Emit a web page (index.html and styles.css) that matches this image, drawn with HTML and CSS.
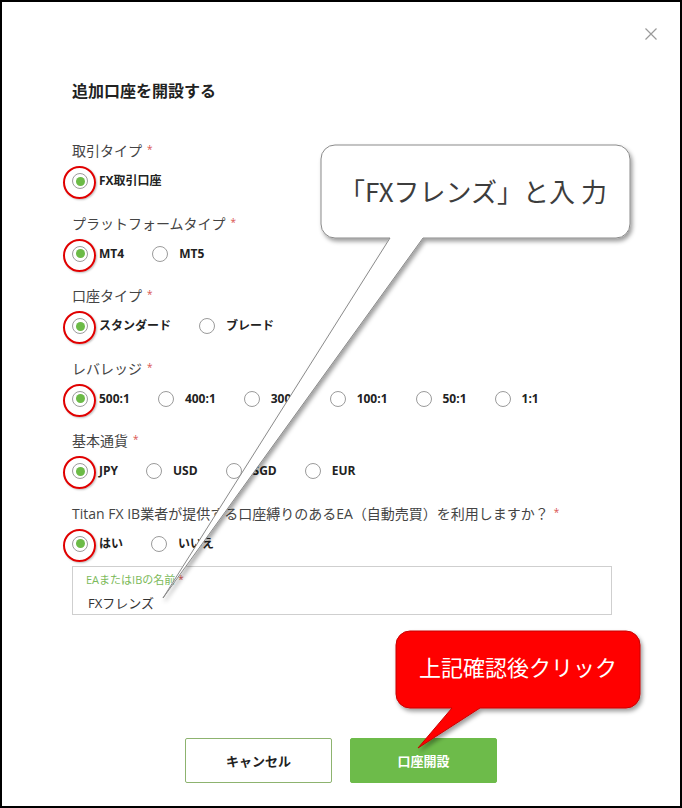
FILE: index.html
```html
<!DOCTYPE html>
<html lang="ja">
<head>
<meta charset="utf-8">
<title>追加口座を開設する</title>
<link rel="stylesheet" href="styles.css">
</head>
<body>
<div class="frame">
  <div class="header">
    <svg class="close" width="12" height="12" viewBox="0 0 12 12"><path d="M0.5 0.5 L11.5 11.5 M11.5 0.5 L0.5 11.5" stroke="#9a9a9a" stroke-width="1.2" fill="none"/></svg>
  </div>
  <div class="content">
    <h1 class="title">追加口座を開設する</h1>

    <div class="group">
      <div class="label">取引タイプ<span class="req">*</span></div>
      <div class="options">
        <label class="opt"><span class="radio checked"><span class="mark"></span></span><span class="txt">FX取引口座</span></label>
      </div>
    </div>

    <div class="group">
      <div class="label">プラットフォームタイプ<span class="req">*</span></div>
      <div class="options">
        <label class="opt"><span class="radio checked"><span class="mark"></span></span><span class="txt">MT4</span></label>
        <label class="opt"><span class="radio"></span><span class="txt">MT5</span></label>
      </div>
    </div>

    <div class="group">
      <div class="label">口座タイプ<span class="req">*</span></div>
      <div class="options">
        <label class="opt"><span class="radio checked"><span class="mark"></span></span><span class="txt">スタンダード</span></label>
        <label class="opt"><span class="radio"></span><span class="txt">ブレード</span></label>
      </div>
    </div>

    <div class="group">
      <div class="label">レバレッジ<span class="req">*</span></div>
      <div class="options">
        <label class="opt"><span class="radio checked"><span class="mark"></span></span><span class="txt">500:1</span></label>
        <label class="opt"><span class="radio"></span><span class="txt">400:1</span></label>
        <label class="opt"><span class="radio"></span><span class="txt">300:1</span></label>
        <label class="opt"><span class="radio"></span><span class="txt">100:1</span></label>
        <label class="opt"><span class="radio"></span><span class="txt">50:1</span></label>
        <label class="opt"><span class="radio"></span><span class="txt">1:1</span></label>
      </div>
    </div>

    <div class="group">
      <div class="label">基本通貨<span class="req">*</span></div>
      <div class="options">
        <label class="opt"><span class="radio checked"><span class="mark"></span></span><span class="txt">JPY</span></label>
        <label class="opt"><span class="radio"></span><span class="txt">USD</span></label>
        <label class="opt"><span class="radio"></span><span class="txt">SGD</span></label>
        <label class="opt"><span class="radio"></span><span class="txt">EUR</span></label>
      </div>
    </div>

    <div class="group">
      <div class="label">Titan FX IB業者が提供する口座縛りのあるEA（自動売買）を利用しますか？<span class="req">*</span></div>
      <div class="options">
        <label class="opt"><span class="radio checked"><span class="mark"></span></span><span class="txt">はい</span></label>
        <label class="opt"><span class="radio"></span><span class="txt">いいえ</span></label>
      </div>
    </div>

    <div class="field">
      <div class="field-label">EAまたはIBの名前<span class="req">*</span></div>
      <div class="field-value">FXフレンズ</div>
    </div>
  </div>

  <div class="actions">
    <button class="btn btn-cancel">キャンセル</button>
    <button class="btn btn-submit">口座開設</button>
  </div>
</div>

<svg class="overlay" width="682" height="808" viewBox="0 0 682 808">
  <defs>
    <filter id="sh" x="-20%" y="-20%" width="140%" height="140%">
      <feDropShadow dx="2" dy="3" stdDeviation="2.2" flood-color="#000" flood-opacity="0.38"/>
    </filter>
  </defs>
  <path filter="url(#sh)" fill="#ffffff" stroke="#8a8a8a" stroke-width="1"
    d="M335 145 H616 A14 14 0 0 1 630 159 V224 A14 14 0 0 1 616 238 H423 L163 598 L390 238 H335 A14 14 0 0 1 321 224 V159 A14 14 0 0 1 335 145 Z"/>
  <text class="bubble-text" x="473" y="190" text-anchor="middle" dominant-baseline="central">「FXフレンズ」と入 力</text>
  <path filter="url(#sh)" fill="#ff0000" stroke="#c80000" stroke-width="1"
    d="M410 631 H626 A14 14 0 0 1 640 645 V694 A14 14 0 0 1 626 708 H480 L418 748 L452 708 H410 A14 14 0 0 1 396 694 V645 A14 14 0 0 1 410 631 Z"/>
  <text class="bubble-text red" x="518" y="666" text-anchor="middle" dominant-baseline="central">上記確認後クリック</text>
</svg>
</body>
</html>
```

FILE: styles.css
```css
* { box-sizing: border-box; }

body {
  margin: 0;
  position: relative;
  background: #fff;
  font-family: "Open Sans", "Noto Sans CJK JP", sans-serif;
}

.frame {
  width: 682px;
  height: 808px;
  border: 2px solid #000;
  background: #fff;
}

.header {
  display: flex;
  justify-content: flex-end;
  padding: 26px 23px 0 0;
  height: 38px;
}

.close { display: block; }

.content {
  padding-left: 70px;
}

.title {
  margin: 38px 0 39px;
  height: 24px;
  font-size: 16px;
  line-height: 24px;
  font-weight: 700;
  color: #222;
  font-family: "Noto Sans CJK JP", sans-serif;
}

.group {
  margin-bottom: 22.6px;
}

.label {
  height: 20px;
  font-size: 14px;
  line-height: 20px;
  color: #444;
  margin-bottom: 10px;
  white-space: nowrap;
}

.req {
  color: #d9534f;
  font-size: 10px;
  line-height: 10px;
  margin-left: 5px;
  vertical-align: 3px;
}

.options {
  display: flex;
  align-items: center;
  height: 20px;
}

.opt {
  display: flex;
  align-items: center;
  height: 20px;
  gap: 11px;
  margin-right: 28px;
}

.txt {
  font-size: 12px;
  font-weight: 700;
  color: #222;
  line-height: 20px;
  height: 20px;
}

.radio {
  position: relative;
  width: 16px;
  height: 16px;
  border: 1px solid #9b9b9b;
  border-radius: 50%;
  background: #fff;
  flex: none;
}

.radio.checked::after {
  content: "";
  position: absolute;
  left: 2.5px;
  top: 2.5px;
  width: 9px;
  height: 9px;
  border-radius: 50%;
  background: #6cbb47;
}

.mark {
  position: absolute;
  left: -10px;
  top: -8px;
  width: 33px;
  height: 33px;
  border: 2px solid #e00000;
  border-radius: 50%;
  box-shadow: 1px 1px 2px rgba(0,0,0,0.25);
}

.field {
  margin-top: -10.6px;
  width: 540px;
  height: 49px;
  border: 1px solid #cfcfcf;
  padding: 6px 14px 2px 13px;
}

.field-label {
  height: 14px;
  font-size: 11px;
  line-height: 14px;
  color: #7cba5a;
}

.field-label .req {
  margin-left: 3px;
  vertical-align: 1px;
}

.field-value {
  height: 18px;
  margin-top: 7px;
  margin-left: 2px;
  font-size: 13px;
  line-height: 18px;
  color: #333;
}

.actions {
  display: flex;
  justify-content: center;
  gap: 18px;
  margin-top: 123px;
}

.btn {
  width: 147px;
  height: 45px;
  font-family: "Noto Sans CJK JP", sans-serif;
  font-size: 13px;
  font-weight: 700;
  border-radius: 2px;
  padding: 0;
}

.btn-cancel {
  background: #fff;
  border: 1px solid #8db36f;
  color: #222;
}

.btn-submit {
  background: #6dbb4a;
  border: 1px solid #6dbb4a;
  color: #fff;
}

.overlay {
  position: absolute;
  left: 0;
  top: 0;
  pointer-events: none;
}

.bubble-text {
  font-family: "Noto Sans CJK JP", sans-serif;
  font-size: 26px;
  fill: #3d3d3d;
}

.bubble-text.red {
  font-size: 22px;
  fill: #ffffff;
}
```
